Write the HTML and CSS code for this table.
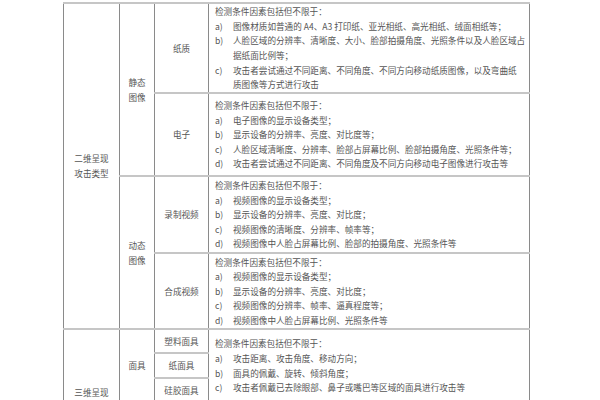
FILE: index.html
```html
<!DOCTYPE html>
<html lang="zh">
<head>
<meta charset="utf-8">
<link rel="stylesheet" href="styles.css">
</head>
<body>
<table class="spec">
  <colgroup>
    <col class="c1"><col class="c2"><col class="c3"><col class="c4">
  </colgroup>
  <tr class="r1">
    <td class="cat" rowspan="4"><div>二维呈现</div><div>攻击类型</div></td>
    <td class="sub" rowspan="2"><div>静态</div><div>图像</div></td>
    <td class="kind">纸质</td>
    <td class="cond">
      <div class="lead">检测条件因素包括但不限于：</div>
      <div class="item"><span class="lb">a)</span><span class="tx">图像材质如普通的 A4、A3 打印纸、亚光相纸、高光相纸、绒面相纸等；</span></div>
      <div class="item"><span class="lb">b)</span><span class="tx">人脸区域的分辨率、清晰度、大小、脸部拍摄角度、光照条件以及人脸区域占<br>据纸面比例等；</span></div>
      <div class="item"><span class="lb">c)</span><span class="tx">攻击者尝试通过不同距离、不同角度、不同方向移动纸质图像，以及弯曲纸<br>质图像等方式进行攻击</span></div>
    </td>
  </tr>
  <tr class="r2">
    <td class="kind">电子</td>
    <td class="cond">
      <div class="lead">检测条件因素包括但不限于：</div>
      <div class="item"><span class="lb">a)</span><span class="tx">电子图像的显示设备类型；</span></div>
      <div class="item"><span class="lb">b)</span><span class="tx">显示设备的分辨率、亮度、对比度等；</span></div>
      <div class="item"><span class="lb">c)</span><span class="tx">人脸区域清晰度、分辨率、脸部占屏幕比例、脸部拍摄角度、光照条件等；</span></div>
      <div class="item"><span class="lb">d)</span><span class="tx">攻击者尝试通过不同距离、不同角度及不同方向移动电子图像进行攻击等</span></div>
    </td>
  </tr>
  <tr class="r3">
    <td class="sub" rowspan="2"><div>动态</div><div>图像</div></td>
    <td class="kind">录制视频</td>
    <td class="cond">
      <div class="lead">检测条件因素包括但不限于：</div>
      <div class="item"><span class="lb">a)</span><span class="tx">视频图像的显示设备类型；</span></div>
      <div class="item"><span class="lb">b)</span><span class="tx">显示设备的分辨率、亮度、对比度；</span></div>
      <div class="item"><span class="lb">c)</span><span class="tx">视频图像的清晰度、分辨率、帧率等；</span></div>
      <div class="item"><span class="lb">d)</span><span class="tx">视频图像中人脸占屏幕比例、脸部的拍摄角度、光照条件等</span></div>
    </td>
  </tr>
  <tr class="r4">
    <td class="kind">合成视频</td>
    <td class="cond">
      <div class="lead">检测条件因素包括但不限于：</div>
      <div class="item"><span class="lb">a)</span><span class="tx">视频图像的显示设备类型；</span></div>
      <div class="item"><span class="lb">b)</span><span class="tx">显示设备的分辨率、亮度、对比度；</span></div>
      <div class="item"><span class="lb">c)</span><span class="tx">视频图像的分辨率、帧率、逼真程度等；</span></div>
      <div class="item"><span class="lb">d)</span><span class="tx">视频图像中人脸占屏幕比例、光照条件等</span></div>
    </td>
  </tr>
  <tr class="r5">
    <td class="cat" rowspan="4"><div>三维呈现</div><div>攻击类型</div></td>
    <td class="sub" rowspan="3"><div>面具</div></td>
    <td class="kind">塑料面具</td>
    <td class="cond" rowspan="3">
      <div class="lead">检测条件因素包括但不限于：</div>
      <div class="item"><span class="lb">a)</span><span class="tx">攻击距离、攻击角度、移动方向；</span></div>
      <div class="item"><span class="lb">b)</span><span class="tx">面具的佩戴、旋转、倾斜角度；</span></div>
      <div class="item"><span class="lb">c)</span><span class="tx">攻击者佩戴已去除眼部、鼻子或嘴巴等区域的面具进行攻击等</span></div>
    </td>
  </tr>
  <tr class="r6">
    <td class="kind">纸面具</td>
  </tr>
  <tr class="r7">
    <td class="kind">硅胶面具</td>
  </tr>
  <tr class="r8">
    <td class="sub"></td>
    <td class="kind"></td>
    <td class="cond"></td>
  </tr>
</table>
</body>
</html>
```

FILE: styles.css
```css
html, body {
  margin: 0;
  padding: 0;
  background: #ffffff;
}

body {
  width: 600px;
  height: 400px;
  overflow: hidden;
  font-family: "Noto Sans CJK SC", "Noto Sans", sans-serif;
  font-size: 8.6px;
  color: #555555;
}

.spec {
  margin: 2px 0 0 63px;
  width: 466px;
  border-collapse: collapse;
  table-layout: fixed;
}

.c1 { width: 56px; }
.c2 { width: 35px; }
.c3 { width: 54px; }
.c4 { width: 321px; }

.spec td {
  padding: 0;
  border-left: 1px solid #8a8a8a;
  border-right: 1px solid #8a8a8a;
  border-top: 2px solid #c6c6c6;
  border-bottom: 2px solid #c6c6c6;
  vertical-align: middle;
  text-align: center;
  line-height: 15px;
}

.r1 { height: 90px; }
.r2 { height: 83px; }
.r3 { height: 77px; }
.r4 { height: 76px; }
.r5 { height: 24px; }
.r6 { height: 25px; }
.r7 { height: 24px; }
.r8 { height: 68px; }

.spec td.cond {
  text-align: left;
  padding-left: 6px;
  line-height: 14.6px;
}

.item {
  display: flex;
  white-space: nowrap;
}

.lb {
  width: 18px;
  flex: none;
}

.tx {
  flex: 1;
}
```
